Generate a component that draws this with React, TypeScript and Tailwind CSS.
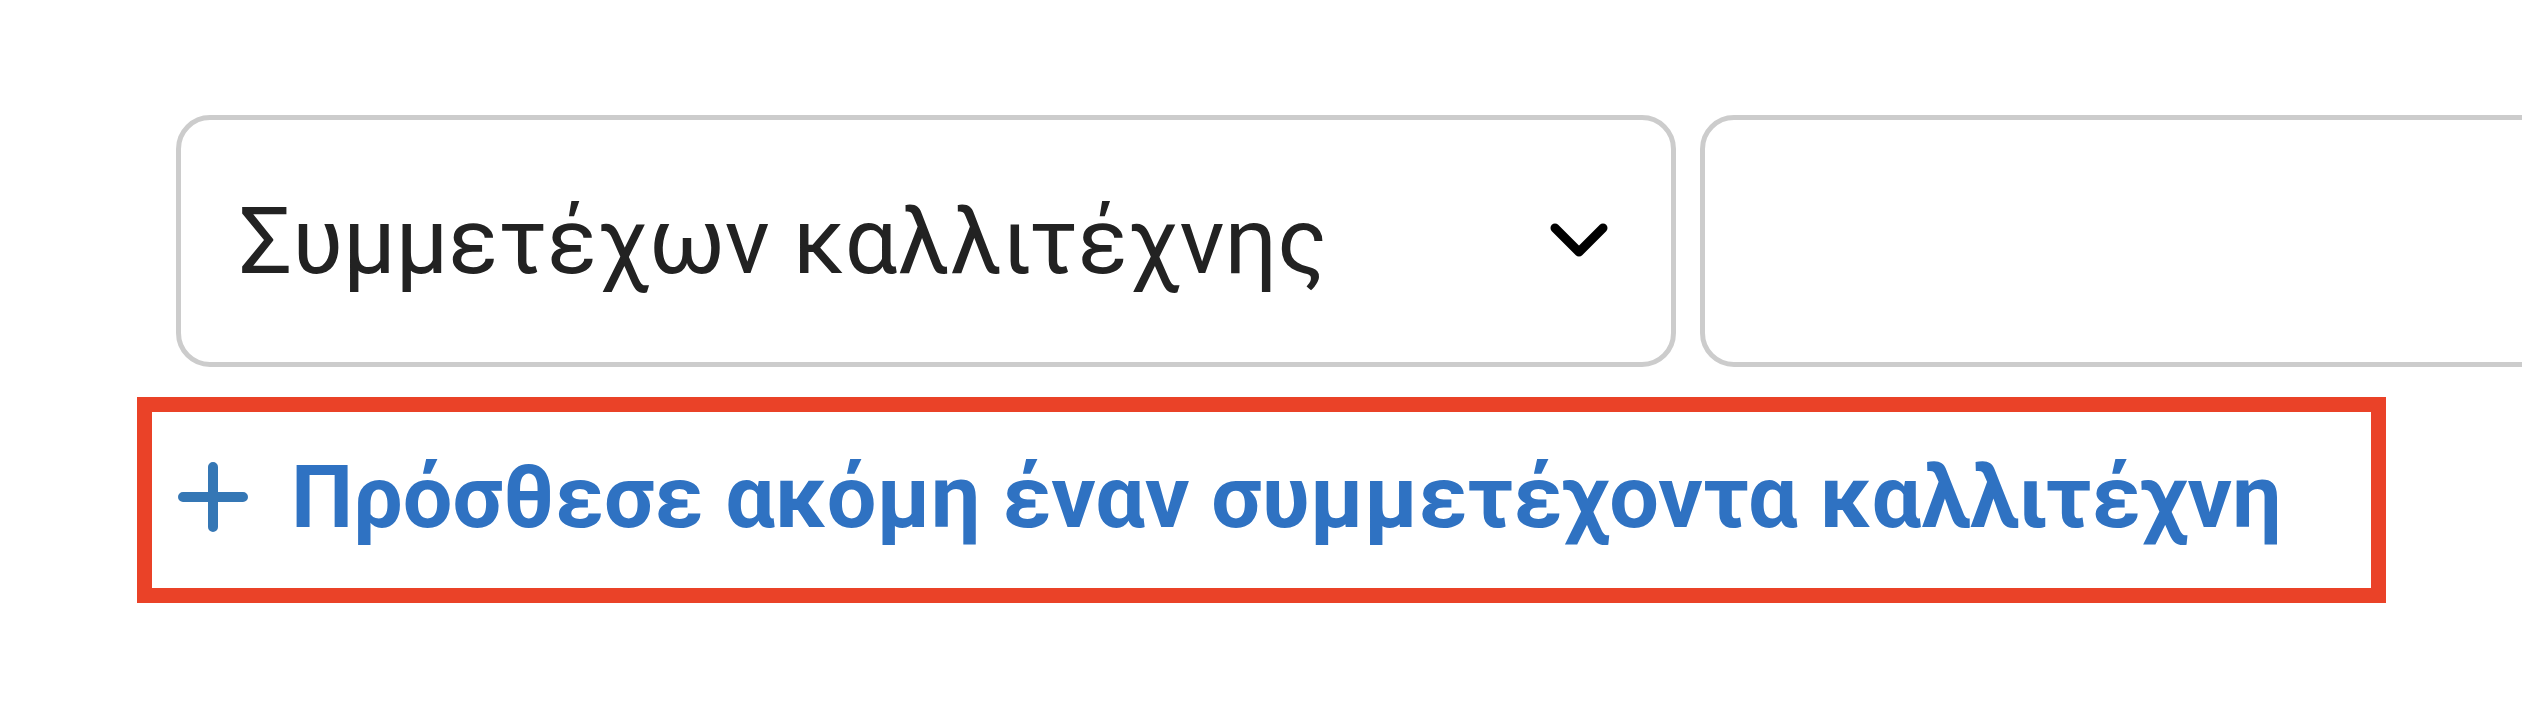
import React from "react";

export default function App() {
  return (
    <div className="w-[2522px] h-[702px] bg-white overflow-hidden pl-[137px] pt-[115px]" style={{ fontFamily: "Roboto, 'Noto Sans', sans-serif" }}>
      <div className="flex gap-[24px] ml-[39px]">
        <div className="w-[1500px] h-[252px] shrink-0 border-[5px] border-[#cccccc] rounded-[34px] flex items-center pl-[58px] pr-[62px]">
          <span className="flex-1 text-[93px] leading-none text-[#222222] whitespace-nowrap">Συμμετέχων καλλιτέχνης</span>
          <svg width="60" height="38" viewBox="0 0 60 38" className="shrink-0">
            <polyline points="6,6 30,30 54,6" fill="none" stroke="#000" strokeWidth="9" strokeLinecap="round" strokeLinejoin="round" />
          </svg>
        </div>
        <div className="w-[1500px] h-[252px] shrink-0 border-[5px] border-[#cccccc] rounded-[34px]" />
      </div>
      <div className="mt-[30px] w-[2249px] h-[206px] border-[15px] border-[#ea4228] flex items-center pl-[26px] pb-[6px]">
        <svg width="70" height="70" viewBox="0 0 70 70" className="shrink-0">
          <path d="M35 5 V65 M5 35 H65" fill="none" stroke="#3577b5" strokeWidth="10" strokeLinecap="round" />
        </svg>
        <span className="ml-[43px] text-[88px] font-bold leading-none text-[#2f72c2] whitespace-nowrap">Πρόσθεσε ακόμη έναν συμμετέχοντα καλλιτέχνη</span>
      </div>
    </div>
  );
}
